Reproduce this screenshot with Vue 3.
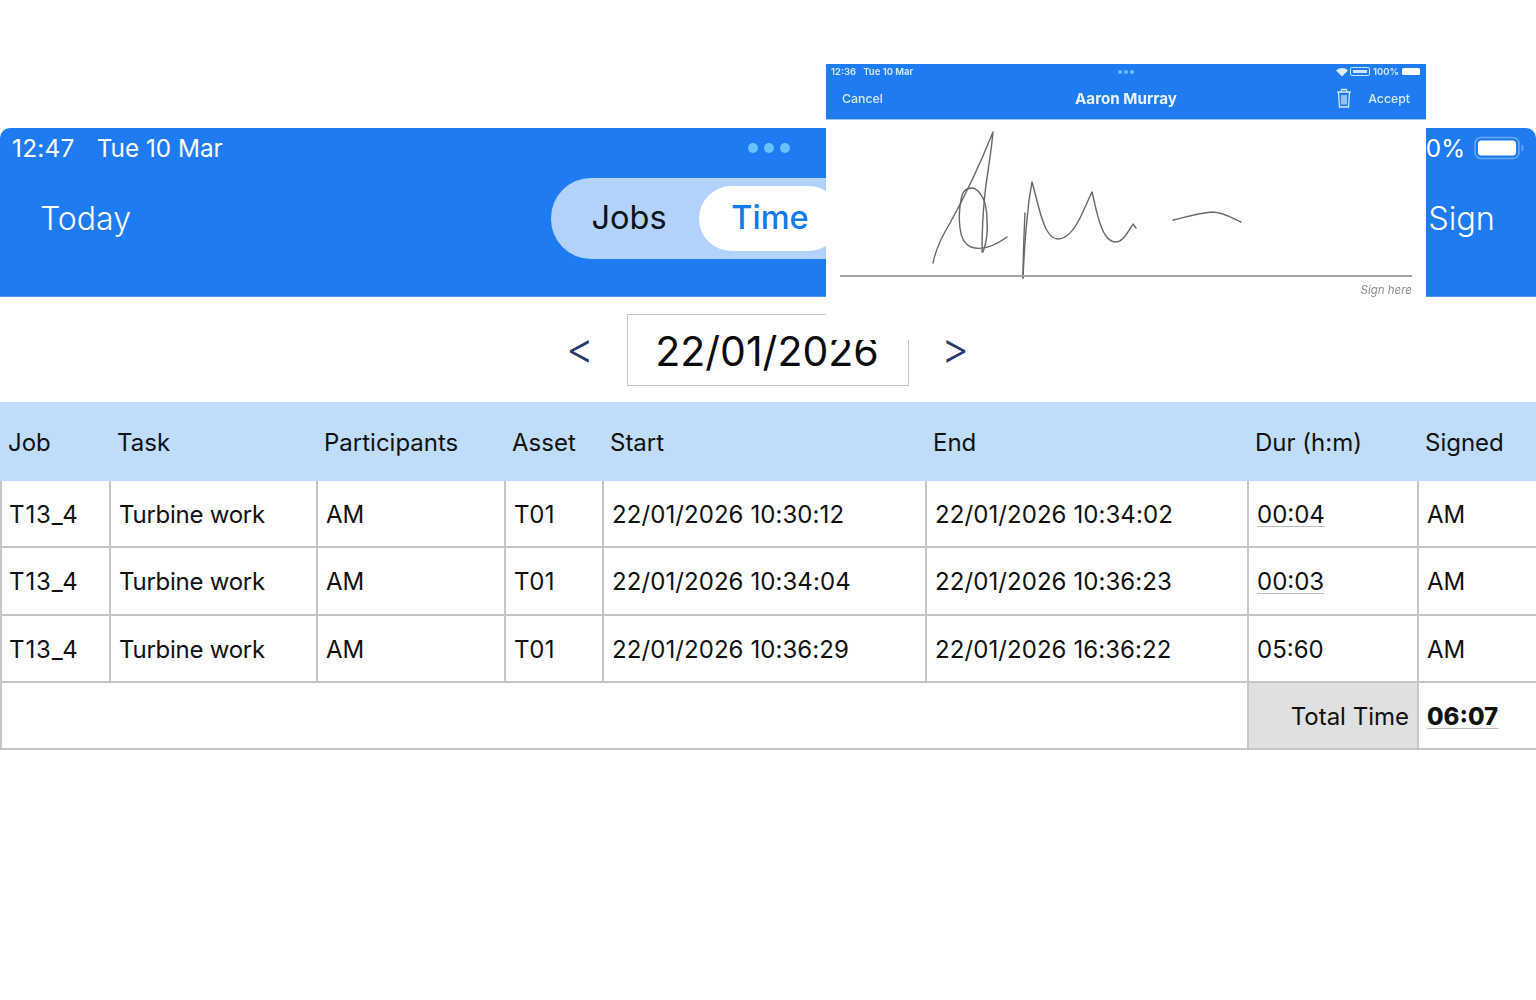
<script setup>
const cols = [109, 207, 188, 98, 323, 322, 170, 119]
const heads = ['Job', 'Task', 'Participants', 'Asset', 'Start', 'End', 'Dur (h:m)', 'Signed']
const rows = [
  { start: '22/01/2026 10:30:12', end: '22/01/2026 10:34:02', dur: '00:04', link: true },
  { start: '22/01/2026 10:34:04', end: '22/01/2026 10:36:23', dur: '00:03', link: true },
  { start: '22/01/2026 10:36:29', end: '22/01/2026 16:36:22', dur: '05:60', link: false },
]
</script>

<template>
  <div class="page">
    <header class="bar">
      <div class="status">
        <span class="clock">12:47</span>
        <span>Tue 10 Mar</span>
        <span class="dots"><i></i><i></i><i></i></span>
        <span class="batt">
          <span>100%</span>
          <svg width="50" height="24" viewBox="0 0 50 24">
            <rect x="1" y="1.5" width="44" height="21" rx="6" fill="none" stroke="#6ba8f8" stroke-width="1.5"/>
            <rect x="4" y="4.5" width="38" height="15" rx="3.5" fill="#fff"/>
            <path d="M47.5 8.500c1.500.500 2 2 2 3.500s-.500 3-2 3.500z" fill="#6ba8f8"/>
          </svg>
        </span>
      </div>
      <div class="nav">
        <span class="today">Today</span>
        <div class="seg">
          <span class="seg-off">Jobs</span>
          <span class="seg-on">Time</span>
        </div>
        <span class="sign">Sign</span>
      </div>
    </header>

    <div class="dates">
      <span class="arrow">&lt;</span>
      <div class="datebox">22/01/2026</div>
      <span class="arrow">&gt;</span>
    </div>

    <table class="grid">
      <colgroup>
        <col v-for="(c, i) in cols" :key="i" :style="{ width: c + 'px' }" />
      </colgroup>
      <thead>
        <tr>
          <th v-for="h in heads" :key="h">{{ h }}</th>
        </tr>
      </thead>
      <tbody>
        <tr v-for="(r, i) in rows" :key="i">
          <td class="job">T13_4</td>
          <td class="task">Turbine work</td>
          <td>AM</td>
          <td class="asset">T01</td>
          <td class="stamp">{{ r.start }}</td>
          <td class="stamp">{{ r.end }}</td>
          <td><span :class="{ link: r.link }">{{ r.dur }}</span></td>
          <td>AM</td>
        </tr>
        <tr>
          <td colspan="6"></td>
          <td class="total-label">Total Time</td>
          <td class="total"><span class="link">06:07</span></td>
        </tr>
      </tbody>
    </table>

    <aside class="shot">
      <div class="shot-bar">
        <div class="shot-status soft">
          <span>12:36&nbsp;&nbsp;&nbsp;Tue 10 Mar</span>
          <span class="shot-dots"><i></i><i></i><i></i></span>
          <span class="shot-batt">
            <svg class="wifi" width="14" height="10" viewBox="0 0 14 10"><path d="M1 3.500a8.500 8.500 0 0 1 12 0L7 9.500z" fill="#dcebff"/></svg>
            <svg width="20" height="9" viewBox="0 0 20 9"><rect x=".5" y=".5" width="19" height="8" rx="1.500" fill="none" stroke="#cfe2fd"/><rect x="3" y="3" width="14" height="3" fill="#cfe2fd"/></svg>
            <span>100%</span>
            <svg width="20" height="9" viewBox="0 0 20 9"><rect x="0" y="1" width="18" height="7" rx="1.500" fill="#fff"/></svg>
          </span>
        </div>
        <div class="shot-nav soft">
          <span>Cancel</span>
          <strong>Aaron Murray</strong>
          <span class="shot-right">
            <svg width="18" height="22" viewBox="0 0 18 22" fill="none" stroke="#d5e5fc" stroke-width="1.300">
              <path d="M2 5h14M6.500 5V2.500h5V5M3.500 5l1 15h9l1-15M7 8v9.500M9 8v9.500M11 8v9.500"/>
            </svg>
            <span>Accept</span>
          </span>
        </div>
      </div>
      <div class="pad">
        <svg class="ink soft" width="600" height="178" viewBox="0 0 600 178" fill="none" stroke="#686868" stroke-width="1.400" stroke-linecap="round" stroke-linejoin="round">
          <path d="M107 143C110 128 116 116 124 103C138 78 155 42 167 12C165 35 161 55 159 73C157 92 156 112 156 132"/>
          <path d="M157 78C153 71 149 68 146 68C140 68 136 72 135 80C133 90 133 100 134 108C135 118 138 124 145 127C156 131 170 125 181 117"/>
          <path d="M157 78C160 85 161 92 161 100C162 112 160 124 157 132"/>
          <path d="M199 93C198 115 197 138 197 158"/>
          <path d="M197 158C198 135 199 118 201 100C202 86 204 72 206 62C209 72 211 82 214 92C218 106 223 119 232 119C241 119 248 110 254 98C259 88 263 78 266 72C269 84 271 96 275 106C279 117 284 122 290 122C297 122 302 112 307 104L310 108"/>
          <path d="M347 100C360 97 373 93 386 92C397 92 406 98 415 102"/>
        </svg>
        <div class="rule soft"></div>
        <div class="hint soft">Sign here</div>
      </div>
    </aside>
  </div>
</template>

<style>
html, body { margin: 0; background: #fff; }
</style>

<style scoped>
.page {
  position: relative;
  width: 1536px;
  height: 1000px;
  padding-top: 128px;
  box-sizing: border-box;
  overflow: hidden;
  font-family: Inter, "Liberation Sans", sans-serif;
  color: #111;
}
.bar {
  height: 169px;
  box-sizing: border-box;
  background: #1f7bf2;
  border-radius: 10px 10px 0 0;
  border-bottom: 1px solid #4d96f5;
  color: #fff;
}
.status {
  display: flex;
  align-items: center;
  height: 40px;
  padding: 0 12px;
  font-size: 24.300px;
}
.clock { margin-right: 22px; letter-spacing: .3px; }
.dots { display: flex; gap: 6px; margin-left: 525px; }
.dots i { width: 10px; height: 10px; border-radius: 50%; background: #6cc0fb; }
.batt { margin-left: auto; display: flex; align-items: center; gap: 9px; }
.nav {
  position: relative;
  display: flex;
  align-items: center;
  height: 100px;
  padding: 0 41px 2px;
  font-size: 32.500px;
  font-weight: 300;
}
.today { margin-left: -1px; font-size: 32px; }
.seg {
  position: absolute;
  left: 551px;
  top: 10px;
  width: 434px;
  height: 81px;
  display: flex;
  align-items: center;
  padding: 8px;
  box-sizing: border-box;
  border-radius: 40px;
  background: #b2d1fb;
  font-size: 32.500px;
  font-weight: 400;
}
.seg-off { width: 140px; padding-bottom: 2px; text-align: center; color: #0b1220; }
.seg-on {
  width: 142px;
  height: 65px;
  line-height: 63px;
  text-align: center;
  border-radius: 33px;
  background: #fff;
  color: #1379ec;
  font-weight: 500;
}
.sign { margin-left: auto; }
.dates {
  height: 105px;
  display: flex;
  align-items: center;
  padding-left: 566px;
  box-sizing: border-box;
  color: #2a3a6b;
}
.arrow { width: 61px; padding-bottom: 2px; font-size: 43px; font-weight: 300; line-height: 1; }
.datebox {
  width: 282px;
  height: 72px;
  margin-right: 32px;
  padding-right: 2px;
  box-sizing: border-box;
  border: 1px solid #c6c6c8;
  text-align: center;
  line-height: 72px;
  font-size: 41px;
  font-weight: 400;
  color: #0a0a0a;
}
.grid {
  width: 1536px;
  table-layout: fixed;
  border-collapse: collapse;
  font-size: 24px;
}
th {
  height: 78px;
  padding: 4px 7px 0;
  box-sizing: border-box;
  background: #c0dcfb;
  border: 2px solid #c0dcfb;
  border-width: 0 0 2px;
  font-weight: 400;
  text-align: left;
  color: #111;
}
th:first-child { border-left-width: 2px; padding-left: 6px; }
td {
  height: 67.300px;
  padding: 2px 8px 0;
  box-sizing: border-box;
  border: 2px solid #c6c6c6;
}
.job { letter-spacing: .9px; padding-left: 7px; }
.task { letter-spacing: -.25px; }
.asset { letter-spacing: .5px; }
.stamp { letter-spacing: .08px; }
.link {
  text-decoration: underline;
  text-decoration-color: #bcbcbc;
  text-decoration-thickness: 1px;
  text-underline-offset: 3px;
}
.total-label { background: #e0e0e0; text-align: right; }
.total { font-weight: 800; }
.shot {
  position: absolute;
  left: 826px;
  top: 64px;
  width: 600px;
  height: 276px;
  background: #fff;
}
.soft { filter: blur(.4px); }
.shot-bar {
  position: relative;
  height: 55px;
  background: #1f7bf2;
  border-bottom: 1px solid #9cc4f8;
  color: #dbe9fd;
}
.shot-status {
  display: flex;
  align-items: center;
  justify-content: space-between;
  height: 15px;
  padding: 0 4px 0 5px;
  font-size: 9.500px;
  font-weight: 600;
}
.shot-dots {
  position: absolute;
  left: 292px;
  top: 6px;
  display: flex;
  gap: 2px;
}
.shot-dots i { width: 4px; height: 4px; border-radius: 50%; background: #6cc0fb; }
.shot-batt { display: flex; align-items: center; gap: 3px; }
.wifi { margin-right: -2px; }
.shot-nav {
  position: relative;
  display: flex;
  align-items: center;
  justify-content: space-between;
  height: 38px;
  padding: 0 16px;
  font-size: 12.300px;
  font-weight: 500;
}
.shot-nav strong {
  position: absolute;
  left: 0;
  right: 0;
  text-align: center;
  font-size: 15.200px;
  font-weight: 700;
  color: #eaf2ff;
}
.shot-right { display: flex; align-items: center; gap: 15px; }
.pad { position: relative; height: 220px; }
.ink { position: absolute; left: 0; top: 0; }
.rule {
  position: absolute;
  left: 14px;
  top: 155px;
  width: 572px;
  height: 2px;
  background: #a4a4a4;
}
.hint {
  position: absolute;
  right: 14px;
  top: 163px;
  font-size: 11.500px;
  font-style: italic;
  color: #8d8d8d;
}
</style>
